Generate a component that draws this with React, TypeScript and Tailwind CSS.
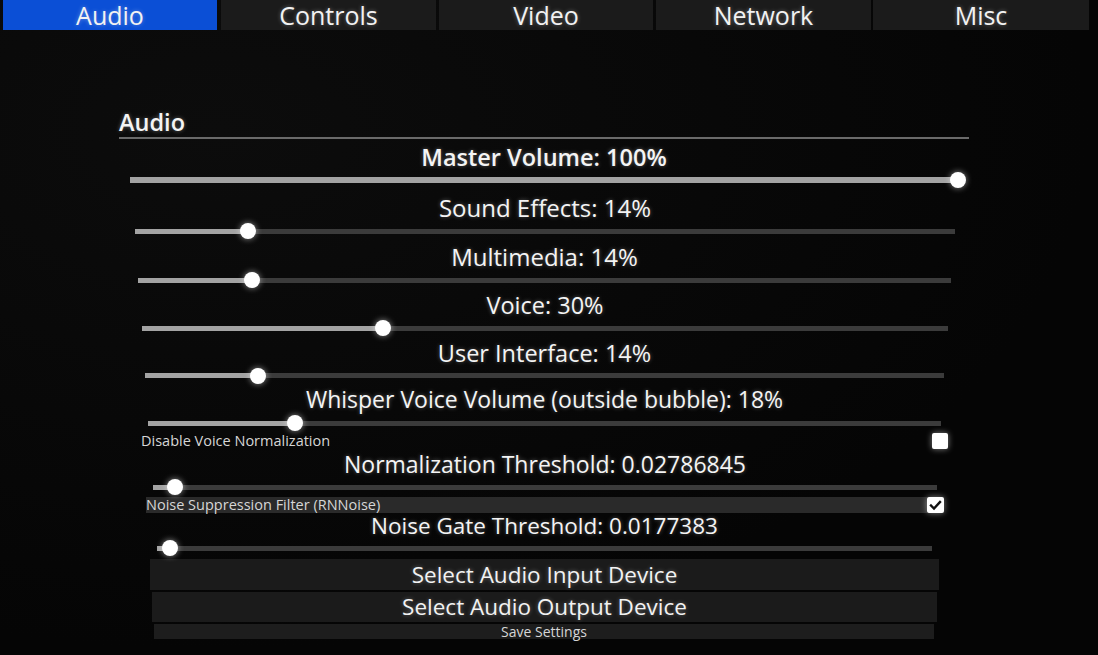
import React from "react";

type Row = {
  label: string;
  value: number;
  row: string;
  labelH: string;
  size: string;
  bold?: boolean;
  thick?: boolean;
};

const sliders: Row[] = [
  { label: "Master Volume: 100%", value: 1, row: "ml-[130px] mr-[140px] h-[51px]", labelH: "h-[28px] leading-[28px]", size: "text-[23.5px]", bold: true, thick: true },
  { label: "Sound Effects: 14%", value: 0.138, row: "ml-[135px] mr-[143px] h-[49px]", labelH: "h-[28px] leading-[28px]", size: "text-[24px]" },
  { label: "Multimedia: 14%", value: 0.14, row: "ml-[138px] mr-[147px] h-[48px]", labelH: "h-[28px] leading-[28px]", size: "text-[24px]" },
  { label: "Voice: 30%", value: 0.299, row: "ml-[142px] mr-[150px] h-[48px]", labelH: "h-[28px] leading-[28px]", size: "text-[23.5px]" },
  { label: "User Interface: 14%", value: 0.141, row: "ml-[145px] mr-[154px] h-[45px]", labelH: "h-[28px] leading-[28px]", size: "text-[23.5px]" },
  { label: "Whisper Voice Volume (outside bubble): 18%", value: 0.185, row: "ml-[148px] mr-[157px] h-[48px]", labelH: "h-[30px] leading-[30px]", size: "text-[23px]" },
];

const glow = "[text-shadow:0_0_4px_rgba(255,255,255,0.35)]";

function Slider({ r }: { r: Row }) {
  return (
    <div className={`flex flex-col ${r.row}`}>
      <div className={`${r.labelH} ${r.size} text-center text-[#f4f4f4] ${glow} ${r.bold ? "font-semibold" : "font-normal"} whitespace-nowrap`}>
        {r.label}
      </div>
      <Track value={r.value} thick={r.thick} />
    </div>
  );
}

function Track({ value, thick }: { value: number; thick?: boolean }) {
  return (
    <div className="relative flex h-[18px] items-center">
      <div className={`relative w-full ${thick ? "h-[6px]" : "h-[5px]"} bg-[#3b3b3b]`}>
        <div className="absolute left-0 top-0 h-full bg-[#a3a3a3]" style={{ width: `${value * 100}%` }} />
        <div
          className="absolute top-1/2 h-[16px] w-[16px] -translate-x-1/2 -translate-y-1/2 rounded-full bg-white shadow-[0_0_6px_rgba(255,255,255,0.55)]"
          style={{ left: `${value * 100}%` }}
        />
      </div>
    </div>
  );
}

const tabs = [
  { name: "Audio", cls: "ml-[3px] w-[214px] bg-[#0b4fd6]" },
  { name: "Controls", cls: "ml-[4px] w-[215px] bg-[#1b1b1b]" },
  { name: "Video", cls: "ml-[3px] w-[214px] bg-[#1b1b1b]" },
  { name: "Network", cls: "ml-[3px] w-[215px] bg-[#1b1b1b]" },
  { name: "Misc", cls: "ml-[2px] w-[216px] bg-[#1b1b1b]" },
];

export default function App() {
  return (
    <div className="h-[655px] w-[1098px] overflow-hidden bg-[radial-gradient(ellipse_at_20%_20%,#0c0c0c,#050505_70%)] font-['Open_Sans',sans-serif] text-white">
      <div className="flex h-[30px]">
        {tabs.map((t) => (
          <div key={t.name} className={`${t.cls} h-full text-center text-[25px] leading-[30px] text-[#f2f2f2] ${glow}`}>
            {t.name}
          </div>
        ))}
      </div>

      <div className="ml-[119px] mr-[129px] mt-[77px] h-[32px] border-b-2 border-[#6a6a6a]">
        <div className={`h-[30px] text-[23.5px] font-semibold leading-[30px] text-[#f4f4f4] ${glow}`}>Audio</div>
      </div>

      <div className="mt-[4px] flex flex-col">
        {sliders.map((r) => (
          <Slider key={r.label} r={r} />
        ))}

        <div className="ml-[141px] mr-[150px] flex h-[18px] items-center justify-between">
          <span className="text-[14.5px] leading-none text-[#d6d6d6]">Disable Voice Normalization</span>
          <div className="h-[16px] w-[16px] rounded-[2px] bg-white shadow-[0_0_6px_rgba(255,255,255,0.5)]" />
        </div>

        <div className="ml-[153px] mr-[161px] flex h-[47px] flex-col">
          <div className={`h-[28px] text-center text-[23px] leading-[28px] text-[#f4f4f4] ${glow} whitespace-nowrap`}>
            Normalization Threshold: 0.02786845
          </div>
          <Track value={0.028} />
        </div>

        <div className="ml-[146px] mr-[154px] flex h-[16px] items-stretch">
          <div className="flex flex-1 items-center bg-[#2a2a2a]">
            <span className="whitespace-nowrap text-[14.5px] leading-none text-[#d6d6d6]">Noise Suppression Filter (RNNoise)</span>
          </div>
          <div className="flex h-[16px] w-[17px] items-center justify-center rounded-[2px] bg-white shadow-[0_0_6px_rgba(255,255,255,0.5)]">
            <svg width="13" height="13" viewBox="0 0 13 13">
              <polyline points="2,6.5 5,9.5 11,3" fill="none" stroke="#111" strokeWidth="2.4" strokeLinecap="square" />
            </svg>
          </div>
        </div>

        <div className="ml-[157px] mr-[166px] flex h-[44px] flex-col">
          <div className={`h-[26px] text-center text-[22.5px] leading-[26px] text-[#f4f4f4] ${glow} whitespace-nowrap`}>
            Noise Gate Threshold: 0.0177383
          </div>
          <Track value={0.017} />
        </div>

        <div className={`ml-[150px] mr-[159px] mt-[2px] flex h-[31px] items-center justify-center bg-[#1b1b1b] text-[22.5px] text-[#f2f2f2] ${glow}`}>
          Select Audio Input Device
        </div>
        <div className={`ml-[152px] mr-[161px] mt-[2px] flex h-[30px] items-center justify-center bg-[#1b1b1b] text-[22.5px] text-[#f2f2f2] ${glow}`}>
          Select Audio Output Device
        </div>
        <div className="ml-[154px] mr-[164px] mt-[2px] flex h-[15px] items-center justify-center bg-[#1d1d1d] text-[14px] leading-none text-[#d6d6d6]">
          Save Settings
        </div>
      </div>
    </div>
  );
}
